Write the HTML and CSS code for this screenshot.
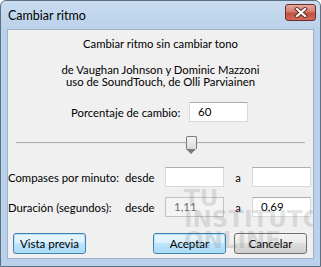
FILE: index.html
```html
<!DOCTYPE html>
<html lang="es">
<head>
<meta charset="UTF-8" />
<title>Cambiar ritmo</title>
<link rel="stylesheet" href="styles.css">
</head>
<body>

<div class="window">
  <div class="titlebar">
    <span class="title">Cambiar ritmo</span>
    <button class="close-btn" aria-label="Cerrar">
      <svg width="14" height="11" viewBox="0 0 14 11">
        <path d="M3 2 L11 9 M11 2 L3 9" stroke="#5a2a2a" stroke-width="4" stroke-linecap="square"/>
        <path d="M3 2 L11 9 M11 2 L3 9" stroke="#fff" stroke-width="2.2" stroke-linecap="square"/>
      </svg>
    </button>
  </div>

  <div class="client">
    <p class="heading">Cambiar ritmo sin cambiar tono</p>
    <p class="credits">de Vaughan Johnson y Dominic Mazzoni<br>uso de SoundTouch, de Olli Parviainen</p>

    <div class="percent-row">
      <label for="percent">Porcentaje de cambio:</label>
      <input type="text" id="percent" class="field" value="60">
    </div>

    <div class="slider">
      <div class="track"></div>
      <div class="thumb"></div>
    </div>

    <div class="range-row">
      <span class="row-label">Compases por minuto:</span>
      <span class="from">desde</span>
      <input type="text" class="field">
      <span class="to">a</span>
      <input type="text" class="field">
    </div>

    <div class="range-row">
      <span class="row-label">Duración (segundos):</span>
      <span class="from">desde</span>
      <input type="text" class="field" value="1,11" disabled>
      <span class="to">a</span>
      <input type="text" class="field" value="0,69">
    </div>

    <div class="buttons">
      <button class="btn btn-blue">Vista previa</button>
      <span class="spacer"></span>
      <button class="btn btn-blue">Aceptar</button>
      <button class="btn">Cancelar</button>
    </div>

    <div class="watermark">TU<br>INSTITUTO<br>ONLINE</div>
  </div>
</div>

</body>
</html>
```

FILE: styles.css
```css
body {
  margin: 0;
  font-family: Lato, "Liberation Sans", sans-serif;
  font-size: 11.3px;
  color: #000;
  background: #fff;
}
.window {
  width: 321px;
  height: 267px;
  box-sizing: border-box;
  border: 1px solid #5f6f82;
  border-radius: 6px 6px 0 0;
  background: linear-gradient(#c9dcf0, #b9d1ea 30px);
  display: flex;
  flex-direction: column;
}
.titlebar {
  height: 28px;
  display: flex;
  align-items: flex-start;
  padding: 0 4px 0 7px;
}
.title {
  margin-top: 7px;
  font-size: 12.5px;
  color: #000;
}
.close-btn {
  margin-left: auto;
  margin-top: 3px;
  width: 31px;
  height: 17px;
  border: 1px solid #6d2b2b;
  border-radius: 3px;
  background: linear-gradient(#e9a99c, #d37b6c 45%, #c4503f 55%, #d06b58);
  display: flex;
  align-items: center;
  justify-content: center;
  padding: 0;
}
.client {
  position: relative;
  flex: 1;
  margin: 0 6px 7px 6px;
  border: 1px solid #a0b4c9;
  background: #f0f0f0;
  overflow: hidden;
  white-space: nowrap;
}
p {
  margin: 0;
  text-align: center;
}
.heading {
  margin-top: 6px;
  line-height: 15px;
}
.credits {
  margin-top: 13px;
  line-height: 12px;
}
.percent-row {
  display: flex;
  align-items: center;
  margin-top: 14px;
  padding-left: 63px;
}
.percent-row label {
  width: 118px;
  flex-shrink: 0;
}
.field {
  box-sizing: border-box;
  flex-shrink: 0;
  width: 59px;
  height: 20px;
  border: 1px solid #d5d9de;
  border-top-color: #abadb3;
  background: #fff;
  font-family: inherit;
  font-size: 11.5px;
  padding: 0 0 2px 8px;
  color: #000;
}
.field:disabled {
  background: #f4f4f4;
  border-color: #c3c3c3;
  color: #6d6d6d;
}
.slider {
  position: relative;
  height: 26px;
  margin-top: 9px;
}
.track {
  position: absolute;
  left: 8px;
  right: 8px;
  top: 11px;
  height: 1px;
  border-top: 1px solid #b0b0b0;
  background: #e7eaea;
}
.thumb {
  position: absolute;
  left: 178px;
  top: 5px;
  width: 9px;
  height: 12px;
  border: 1px solid #7a7a7a;
  border-bottom: none;
  border-radius: 2px 2px 0 0;
  background: linear-gradient(#f6f6f6, #dadada);
}
.thumb::after {
  content: "";
  position: absolute;
  left: -1px;
  top: 12px;
  width: 0;
  height: 0;
  border-left: 5.5px solid transparent;
  border-right: 5.5px solid transparent;
  border-top: 5px solid #7a7a7a;
}
.range-row {
  display: flex;
  align-items: center;
  margin-top: 10px;
}
.row-label {
  width: 117px;
  flex-shrink: 0;
}
.from {
  width: 40px;
  flex-shrink: 0;
}
.to {
  width: 28px;
  flex-shrink: 0;
  text-align: center;
}
.buttons {
  display: flex;
  margin-top: 16px;
  padding: 0 6px 0 5px;
  gap: 8px;
}
.spacer {
  flex: 1;
}
.btn {
  width: 73px;
  height: 21px;
  flex-shrink: 0;
  border: 1px solid #707070;
  border-radius: 3px;
  background: linear-gradient(#f2f2f2, #ebebeb 50%, #dddddd 50%, #cfcfcf);
  font-family: inherit;
  font-size: 11.5px;
  padding: 0 0 1px;
  color: #000;
}
.btn-blue {
  border-color: #3c7fb1;
  background: linear-gradient(#eaf6fd, #d9f0fc 50%, #bee6fd 50%, #a7d9f5);
  box-shadow: inset 0 0 0 1px #b7e3fb;
}
.watermark {
  position: absolute;
  left: 176px;
  top: 158px;
  font-family: "DejaVu Sans", sans-serif;
  font-weight: bold;
  font-size: 23px;
  line-height: 21px;
  color: rgba(110, 110, 110, 0.2);
  pointer-events: none;
}
```
